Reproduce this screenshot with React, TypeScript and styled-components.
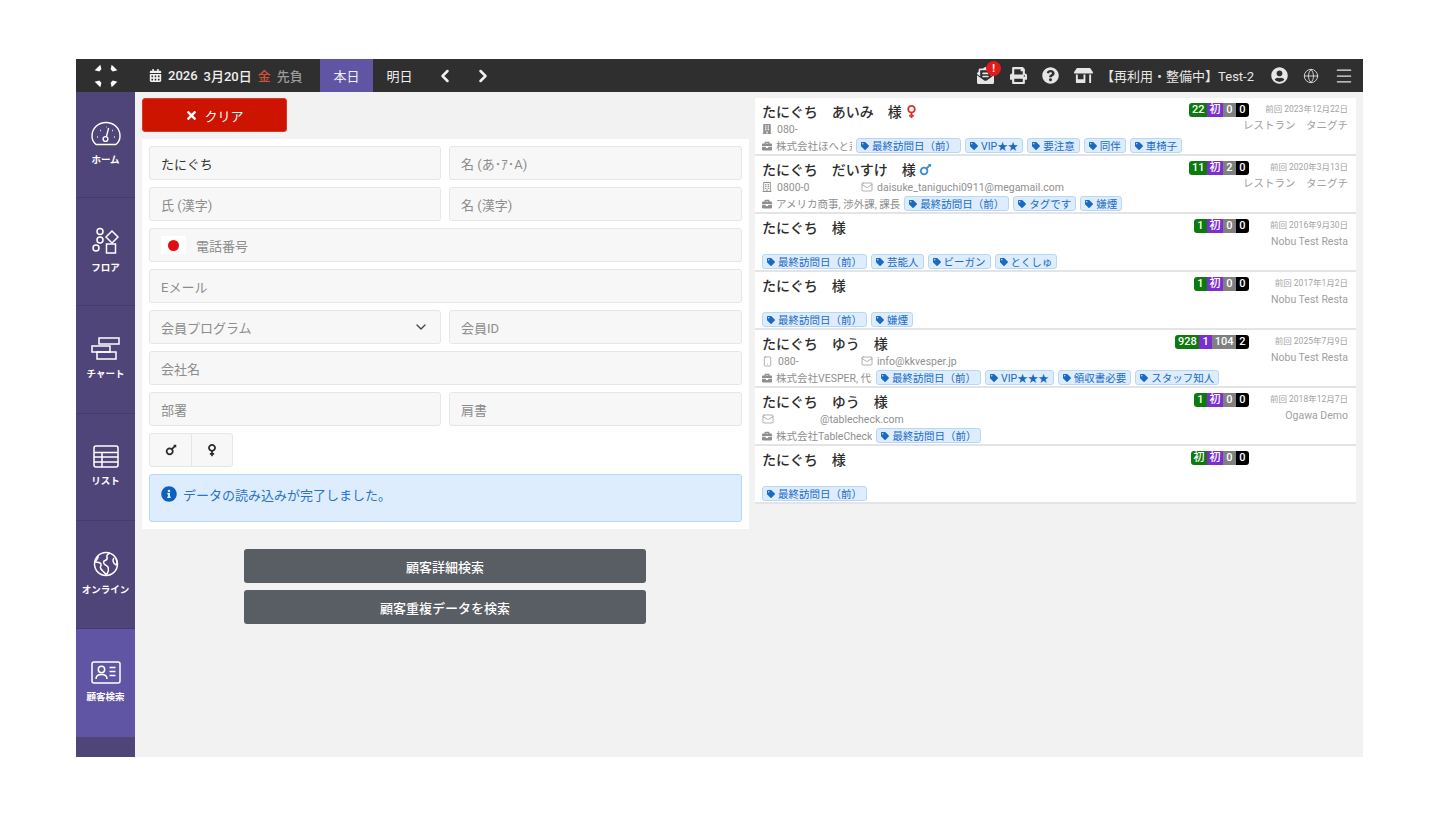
import { createGlobalStyle } from 'styled-components';
import styled from 'styled-components';
import { Globe, Menu, Mail, Smartphone, ChevronDown, ChevronLeft, ChevronRight } from 'lucide-react';
import {
    FaCalendarAlt,
    FaTimes,
    FaPrint,
    FaQuestionCircle,
    FaStoreAlt,
    FaUserCircle,
    FaEnvelopeOpenText,
    FaTag,
    FaInfoCircle,
    FaMars,
    FaVenus,
    FaBriefcase,
    FaRegBuilding,
    FaBuilding,
} from 'react-icons/fa';

const GlobalStyle = createGlobalStyle`
    html, body {
        margin: 0;
        background: #fff;
    }
    body {
        font-family: Roboto, "Noto Sans CJK JP", sans-serif;
    }
    * {
        box-sizing: border-box;
    }
`;

type Tel = 'mobile' | 'office' | 'landline' | 'none';

interface Guest {
    name: string;
    gender?: 'f' | 'm';
    tel?: string;
    telIcon: Tel;
    mail?: string;
    mailOnly?: boolean;
    company?: string;
    companyWidth?: number;
    tags: string[];
    counts: string[];
    last?: string;
    shop?: string;
}

const guests: Guest[] = [
    {
        name: 'たにぐち　あいみ　様',
        gender: 'f',
        tel: '080-',
        telIcon: 'office',
        company: '株式会社ほへと差',
        companyWidth: 76,
        tags: ['最終訪問日（前）', 'VIP★★', '要注意', '同伴', '車椅子'],
        counts: ['22', '初', '0', '0'],
        last: '前回 2023年12月22日',
        shop: 'レストラン　タニグチ',
    },
    {
        name: 'たにぐち　だいすけ　様',
        gender: 'm',
        tel: '0800-0',
        telIcon: 'landline',
        mail: 'daisuke_taniguchi0911@megamail.com',
        company: 'アメリカ商事, 渉外課, 課長',
        tags: ['最終訪問日（前）', 'タグです', '嫌煙'],
        counts: ['11', '初', '2', '0'],
        last: '前回 2020年3月13日',
        shop: 'レストラン　タニグチ',
    },
    {
        name: 'たにぐち　様',
        telIcon: 'none',
        tags: ['最終訪問日（前）', '芸能人', 'ビーガン', 'とくしゅ'],
        counts: ['1', '初', '0', '0'],
        last: '前回 2016年9月30日',
        shop: 'Nobu Test Resta',
    },
    {
        name: 'たにぐち　様',
        telIcon: 'none',
        tags: ['最終訪問日（前）', '嫌煙'],
        counts: ['1', '初', '0', '0'],
        last: '前回 2017年1月2日',
        shop: 'Nobu Test Resta',
    },
    {
        name: 'たにぐち　ゆう　様',
        tel: '080-',
        telIcon: 'mobile',
        mail: 'info@kkvesper.jp',
        company: '株式会社VESPER, 代表',
        companyWidth: 96,
        tags: ['最終訪問日（前）', 'VIP★★★', '領収書必要', 'スタッフ知人'],
        counts: ['928', '1', '104', '2'],
        last: '前回 2025年7月9日',
        shop: 'Nobu Test Resta',
    },
    {
        name: 'たにぐち　ゆう　様',
        telIcon: 'none',
        mail: '@tablecheck.com',
        mailOnly: true,
        company: '株式会社TableCheck',
        tags: ['最終訪問日（前）'],
        counts: ['1', '初', '0', '0'],
        last: '前回 2018年12月7日',
        shop: 'Ogawa Demo',
    },
    {
        name: 'たにぐち　様',
        telIcon: 'none',
        tags: ['最終訪問日（前）'],
        counts: ['初', '初', '0', '0'],
    },
];

const Logo = () => (
    <svg width="24" height="24" viewBox="0 0 24 24" fill="#fff">
        <path d="M8 1 L16 1 L13.5 5 L10.5 5 Z" transform="rotate(-45 12 12) translate(0 -1)" />
        <path d="M8 1 L16 1 L13.5 5 L10.5 5 Z" transform="rotate(45 12 12) translate(0 -1)" />
        <path d="M8 1 L16 1 L13.5 5 L10.5 5 Z" transform="rotate(135 12 12) translate(0 -1)" />
        <path d="M8 1 L16 1 L13.5 5 L10.5 5 Z" transform="rotate(225 12 12) translate(0 -1)" />
    </svg>
);

const GaugeIcon = () => (
    <svg width="30" height="26" viewBox="0 0 30 26" fill="none" stroke="#fff" strokeWidth="1.4">
        <path d="M5 23.5 C2.5 21.5 1 18.2 1 15 C1 7.3 7.3 1.5 15 1.5 C22.7 1.5 29 7.3 29 15 C29 18.2 27.5 21.5 25 23.5 Z" strokeLinejoin="round" />
        <circle cx="14.5" cy="18" r="2.4" />
        <path d="M15.4 15.8 L17.6 7" />
        <path d="M6 16h.8 M9 9.5h.8 M15 6h.4 M23 16h.8 M21 9.5h.8" strokeWidth="1.6" />
    </svg>
);

const FloorIcon = () => (
    <svg width="28" height="28" viewBox="0 0 28 28" fill="none" stroke="#fff" strokeWidth="1.5">
        <circle cx="8" cy="4.5" r="3" />
        <circle cx="8" cy="13" r="3" />
        <circle cx="4" cy="21" r="3" />
        <path d="M20 4 L26 10 L20 16 L14 10 Z" />
        <rect x="14.5" y="17" width="9" height="9" />
    </svg>
);

const ChartIcon = () => (
    <svg width="30" height="24" viewBox="0 0 30 24" fill="none" stroke="#fff" strokeWidth="1.5">
        <rect x="8" y="1" width="20" height="6" />
        <rect x="1" y="9" width="18" height="6" />
        <rect x="6" y="15" width="19" height="7" />
    </svg>
);

const ListIcon = () => (
    <svg width="26" height="23" viewBox="0 0 26 23" fill="none" stroke="#fff" strokeWidth="1.5">
        <rect x="1" y="1" width="24" height="21" rx="2" />
        <path d="M1 7.5h24 M1 12h24 M1 17h24 M9 7.5v14.5" />
    </svg>
);

const WorldIcon = () => (
    <svg width="26" height="26" viewBox="0 0 26 26" fill="none" stroke="#fff" strokeWidth="1.5">
        <circle cx="13" cy="13" r="11.5" />
        <path d="M5 4.5 C6 8 3 9 2 11 C5 11 7 11 8 13 C9 15 6 15 8 18 C10 21 13 22 13 24 C15 22 16 19 15 16 C13 14 9 13 11 10 C13 9 15 9 14 6 C13 4 15 3 17 2" strokeLinejoin="round" />
        <path d="M21 7 C19 9 20 12 23 14 C24 13 24 10 23 8" />
    </svg>
);

const CardIcon = () => (
    <svg width="30" height="23" viewBox="0 0 30 23" fill="none" stroke="#fff" strokeWidth="1.5">
        <rect x="1" y="1" width="28" height="21" rx="2" />
        <circle cx="10.5" cy="8.5" r="3.2" />
        <path d="M5 18 C5 14.5 7 13.5 10.5 13.5 C14 13.5 16 14.5 16 18" />
        <path d="M18.5 6.5h6 M18.5 10.5h6 M18.5 14.5h6" />
    </svg>
);

const navItems = [
    { label: 'ホーム', icon: <GaugeIcon />, height: 106 },
    { label: 'フロア', icon: <FloorIcon />, height: 108 },
    { label: 'チャート', icon: <ChartIcon />, height: 108 },
    { label: 'リスト', icon: <ListIcon />, height: 107 },
    { label: 'オンライン', icon: <WorldIcon />, height: 108 },
    { label: '顧客検索', icon: <CardIcon />, height: 108, active: true },
];

const telIcons = {
    mobile: <Smartphone size={11} strokeWidth={1.5} />,
    office: <FaBuilding size={10} />,
    landline: <FaRegBuilding size={10} />,
    none: null,
};

function GuestRow({ guest }: { guest: Guest }) {
    return (
        <Row>
            <RowMain>
                <NameLine>
                    {guest.name}
                    {guest.gender === 'f' && <FaVenus size={15} color="#d9362b" />}
                    {guest.gender === 'm' && <FaMars size={15} color="#3f8fd0" />}
                </NameLine>
                <ContactLine>
                    {guest.tel && (
                        <TelCell>
                            {telIcons[guest.telIcon]}
                            <span>{guest.tel}</span>
                        </TelCell>
                    )}
                    {guest.mail && (
                        <MailCell $only={guest.mailOnly}>
                            <Mail size={12} strokeWidth={1.4} />
                            <span>{guest.mail}</span>
                        </MailCell>
                    )}
                </ContactLine>
                <TagLine>
                    {guest.company && (
                        <Company>
                            <FaBriefcase size={10} />
                            <CompanyName $width={guest.companyWidth}>{guest.company}</CompanyName>
                        </Company>
                    )}
                    {guest.tags.map((tag) => (
                        <Tag key={tag} $wide={tag.startsWith('最終')}>
                            <FaTag size={8} />
                            {tag}
                        </Tag>
                    ))}
                </TagLine>
            </RowMain>
            <RowSide>
                <Counts>
                    {guest.counts.map((count, i) => (
                        <Count key={i} $kind={i}>
                            {count}
                        </Count>
                    ))}
                </Counts>
                <SideInfo>
                    <LastVisit>{guest.last}</LastVisit>
                    <Shop>{guest.shop}</Shop>
                </SideInfo>
            </RowSide>
        </Row>
    );
}

export default function App() {
    return (
        <Screen>
            <GlobalStyle />
            <Frame>
                <TopBar>
                    <LogoCell>
                        <Logo />
                    </LogoCell>
                    <DateCell>
                        <FaCalendarAlt size={13} />
                        <span>2026</span>
                        <span>3月20日</span>
                        <Weekday>金</Weekday>
                        <Rokuyo>先負</Rokuyo>
                    </DateCell>
                    <DayTab $active>本日</DayTab>
                    <DayTab>明日</DayTab>
                    <Arrow>
                        <ChevronLeft size={20} strokeWidth={3} />
                    </Arrow>
                    <Arrow>
                        <ChevronRight size={20} strokeWidth={3} />
                    </Arrow>
                    <TopRight>
                        <MailBadgeWrap>
                            <FaEnvelopeOpenText size={17} />
                            <Badge>!</Badge>
                        </MailBadgeWrap>
                        <FaPrint size={17} />
                        <FaQuestionCircle size={17} />
                        <FaStoreAlt size={19} />
                        <ShopName>【再利用・整備中】Test-2</ShopName>
                        <FaUserCircle size={17} />
                        <Globe size={16} strokeWidth={1.3} />
                        <Menu size={20} strokeWidth={1.5} />
                    </TopRight>
                </TopBar>
                <Body>
                    <SideNav>
                        {navItems.map((item) => (
                            <NavItem key={item.label} $height={item.height} $active={item.active}>
                                {item.icon}
                                <NavLabel>{item.label}</NavLabel>
                            </NavItem>
                        ))}
                    </SideNav>
                    <Content>
                        <SearchColumn>
                            <ClearButton>
                                <FaTimes size={13} />
                                クリア
                            </ClearButton>
                            <FormPanel>
                                <FieldRow>
                                    <Field $filled>たにぐち</Field>
                                    <Field>名 (あ･ｱ･A)</Field>
                                </FieldRow>
                                <FieldRow>
                                    <Field>氏 (漢字)</Field>
                                    <Field>名 (漢字)</Field>
                                </FieldRow>
                                <Field>
                                    <Flag>
                                        <FlagDot />
                                    </Flag>
                                    電話番号
                                </Field>
                                <Field>Eメール</Field>
                                <FieldRow>
                                    <SelectField>
                                        会員プログラム
                                        <ChevronDown size={16} color="#444" />
                                    </SelectField>
                                    <Field>会員ID</Field>
                                </FieldRow>
                                <Field>会社名</Field>
                                <FieldRow>
                                    <Field>部署</Field>
                                    <Field>肩書</Field>
                                </FieldRow>
                                <GenderGroup>
                                    <GenderButton>
                                        <FaMars size={14} />
                                    </GenderButton>
                                    <GenderButton>
                                        <FaVenus size={14} />
                                    </GenderButton>
                                </GenderGroup>
                                <Alert>
                                    <FaInfoCircle size={16} color="#0d5fc0" />
                                    データの読み込みが完了しました。
                                </Alert>
                            </FormPanel>
                            <ActionStack>
                                <ActionButton>顧客詳細検索</ActionButton>
                                <ActionButton>顧客重複データを検索</ActionButton>
                            </ActionStack>
                        </SearchColumn>
                        <ResultList>
                            {guests.map((guest, i) => (
                                <GuestRow key={i} guest={guest} />
                            ))}
                        </ResultList>
                    </Content>
                </Body>
            </Frame>
        </Screen>
    );
}

const Screen = styled.div`
    width: 1440px;
    height: 817px;
    padding: 59px 77px 60px 76px;
    background: #fff;
    overflow: hidden;
`;

const Frame = styled.div`
    height: 698px;
    display: flex;
    flex-direction: column;
    background: #f2f2f2;
    overflow: hidden;
`;

const TopBar = styled.header`
    height: 33px;
    flex: none;
    display: flex;
    align-items: center;
    background: #2f2f2f;
    color: #f0f0f0;
    font-size: 13px;
`;

const LogoCell = styled.div`
    width: 59px;
    display: flex;
    justify-content: center;
`;

const DateCell = styled.div`
    width: 185px;
    padding-left: 14px;
    display: flex;
    align-items: center;
    gap: 6px;
    font-weight: 500;
`;

const Weekday = styled.span`
    color: #d0523c;
`;

const Rokuyo = styled.span`
    color: #9a9a9a;
`;

const DayTab = styled.div<{ $active?: boolean }>`
    width: 53px;
    height: 33px;
    display: flex;
    align-items: center;
    justify-content: center;
    background: ${(p) => (p.$active ? '#6054a4' : 'transparent')};
`;

const Arrow = styled.div`
    width: 38px;
    display: flex;
    align-items: center;
    justify-content: center;
`;

const TopRight = styled.div`
    margin-left: auto;
    padding-right: 9px;
    display: flex;
    align-items: center;
    gap: 15px;
    color: #e6e6e6;
`;

const MailBadgeWrap = styled.div`
    position: relative;
    display: flex;
    margin-right: 1px;
`;

const Badge = styled.span`
    position: absolute;
    top: -6px;
    right: -7px;
    width: 15px;
    height: 15px;
    border-radius: 50%;
    background: #e01b1b;
    color: #fff;
    font-size: 10px;
    font-weight: 700;
    display: flex;
    align-items: center;
    justify-content: center;
`;

const ShopName = styled.span`
    margin-left: -7px;
    margin-right: 2px;
`;

const Body = styled.div`
    flex: 1;
    display: flex;
    min-height: 0;
`;

const SideNav = styled.nav`
    width: 59px;
    flex: none;
    display: flex;
    flex-direction: column;
    background: #4f4578;
`;

const NavItem = styled.div<{ $height: number; $active?: boolean }>`
    height: ${(p) => p.$height}px;
    flex: none;
    display: flex;
    flex-direction: column;
    align-items: center;
    justify-content: center;
    gap: 5px;
    padding-bottom: 2px;
    background: ${(p) => (p.$active ? '#6054a4' : 'transparent')};
    border-bottom: 1px solid ${(p) => (p.$active ? 'transparent' : '#453c6a')};
    color: #fff;
`;

const NavLabel = styled.span`
    font-size: 9.5px;
    font-weight: 700;
    white-space: nowrap;
`;

const Content = styled.main`
    flex: 1;
    display: flex;
    min-width: 0;
`;

const SearchColumn = styled.section`
    width: 620px;
    padding: 6px 6px 0 7px;
`;

const ClearButton = styled.button`
    width: 145px;
    height: 34px;
    display: flex;
    align-items: center;
    justify-content: center;
    gap: 6px;
    border: 1px solid #d83a2a;
    border-radius: 3px;
    background: #cc1400;
    color: #fff;
    font: inherit;
    font-size: 13px;
`;

const FormPanel = styled.div`
    margin-top: 7px;
    padding: 7px;
    display: flex;
    flex-direction: column;
    gap: 7px;
    background: #fff;
`;

const FieldRow = styled.div`
    display: grid;
    grid-template-columns: 292px 293px;
    gap: 8px;
`;

const Field = styled.div<{ $filled?: boolean }>`
    height: 34px;
    padding: 0 11px;
    display: flex;
    align-items: center;
    border: 1px solid #e6e6e6;
    border-radius: 3px;
    background: #f7f7f7;
    color: ${(p) => (p.$filled ? '#333' : '#8c8c8c')};
    font-size: 13px;
`;

const SelectField = styled(Field)`
    justify-content: space-between;
`;

const Flag = styled.span`
    width: 25px;
    height: 18px;
    margin-right: 10px;
    display: flex;
    align-items: center;
    justify-content: center;
    background: #fff;
`;

const FlagDot = styled.span`
    width: 11px;
    height: 11px;
    border-radius: 50%;
    background: #e00d12;
`;

const GenderGroup = styled.div`
    width: 84px;
    height: 34px;
    display: grid;
    grid-template-columns: 1fr 1fr;
    border: 1px solid #e6e6e6;
    border-radius: 3px;
    background: #f7f7f7;
`;

const GenderButton = styled.div`
    display: flex;
    align-items: center;
    justify-content: center;
    color: #2b2b2b;

    & + & {
        border-left: 1px solid #e6e6e6;
    }
`;

const Alert = styled.div`
    height: 48px;
    padding: 0 11px 8px;
    display: flex;
    align-items: center;
    gap: 6px;
    border: 1px solid #b5d8f6;
    border-radius: 3px;
    background: #deedfd;
    color: #2a74c8;
    font-size: 13px;
`;

const ActionStack = styled.div`
    width: 402px;
    margin: 20px 0 0 102px;
    display: flex;
    flex-direction: column;
    gap: 7px;
`;

const ActionButton = styled.button`
    height: 34px;
    border: none;
    border-radius: 3px;
    background: #595d64;
    color: #fff;
    font: inherit;
    font-size: 13px;
    font-weight: 500;
`;

const ResultList = styled.section`
    width: 601px;
    padding-top: 6px;
    display: flex;
    flex-direction: column;
`;

const Row = styled.article`
    height: 58px;
    padding: 3px 8px 0 7px;
    display: flex;
    justify-content: space-between;
    background: #fff;
    border-bottom: 2px solid #e4e4e4;
`;

const RowMain = styled.div`
    flex: 1;
    min-width: 0;
    display: flex;
    flex-direction: column;
`;

const NameLine = styled.div`
    height: 20px;
    display: flex;
    align-items: center;
    gap: 2px;
    color: #2c2c2c;
    font-size: 14px;
    font-weight: 500;
`;

const ContactLine = styled.div`
    height: 16px;
    display: flex;
    align-items: center;
    color: #8f8f8f;
    font-size: 10.5px;
`;

const TelCell = styled.div`
    width: 99px;
    display: flex;
    align-items: center;
    gap: 5px;
`;

const MailCell = styled.div<{ $only?: boolean }>`
    display: flex;
    align-items: center;
    gap: ${(p) => (p.$only ? '46px' : '4px')};
`;

const TagLine = styled.div`
    height: 17px;
    display: flex;
    align-items: center;
    gap: 4px;
`;

const Company = styled.div`
    display: flex;
    align-items: center;
    gap: 4px;
    color: #8f8f8f;
    font-size: 10.5px;
`;

const CompanyName = styled.span<{ $width?: number }>`
    max-width: ${(p) => (p.$width ? `${p.$width}px` : 'none')};
    overflow: hidden;
    white-space: nowrap;
`;

const Tag = styled.span<{ $wide?: boolean }>`
    height: 15px;
    padding: 0 ${(p) => (p.$wide ? '4px' : '4px')};
    display: inline-flex;
    align-items: center;
    gap: 3px;
    border: 1px solid #b5d8f6;
    border-radius: 3px;
    background: #deedfd;
    color: #1a6ac4;
    font-size: 10.5px;
    white-space: nowrap;
`;

const RowSide = styled.div`
    flex: none;
    display: flex;
    gap: 8px;
`;

const Counts = styled.div`
    height: 14px;
    margin-top: 2px;
    display: flex;
    border-radius: 3px;
    overflow: hidden;
`;

const countColors = ['#0c7a0c', '#7b2fd0', '#808080', '#000'];

const Count = styled.span<{ $kind: number }>`
    padding: 0 2.5px;
    min-width: 13px;
    background: ${(p) => countColors[p.$kind]};
    color: #fff;
    font-size: 11px;
    font-weight: 500;
    line-height: 14px;
    text-align: center;
`;

const SideInfo = styled.div`
    width: 91px;
    text-align: right;
    display: flex;
    flex-direction: column;
    align-items: flex-end;
`;

const LastVisit = styled.span`
    height: 17px;
    color: #a3a3a3;
    font-size: 8.5px;
    line-height: 17px;
    white-space: nowrap;
`;

const Shop = styled.span`
    color: #a0a0a0;
    font-size: 10.5px;
    line-height: 16px;
    white-space: nowrap;
`;
